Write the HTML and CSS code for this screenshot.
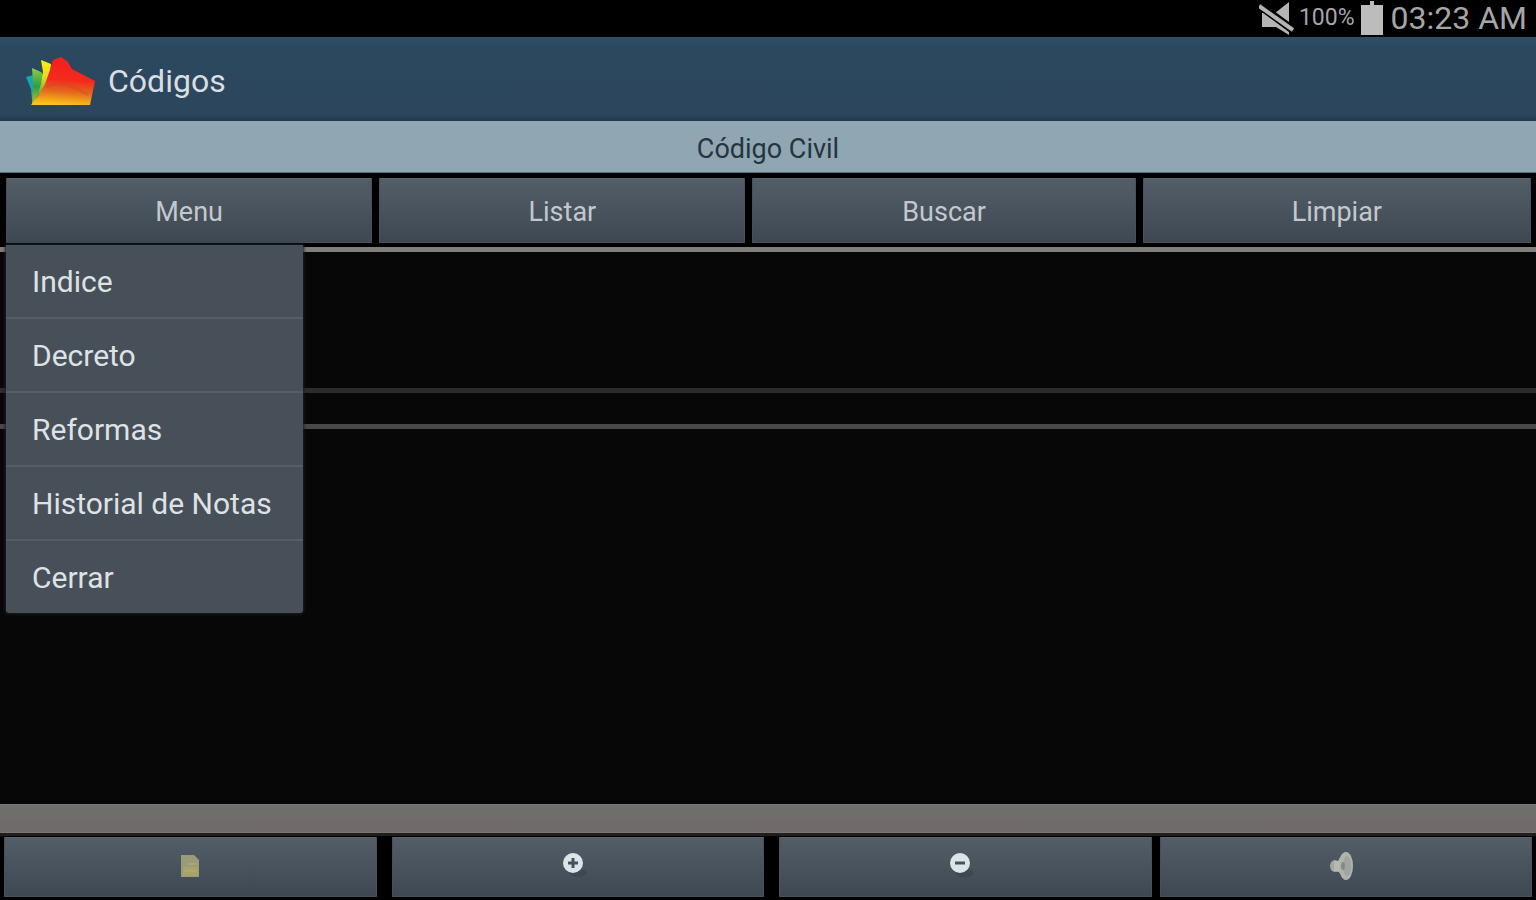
FILE: index.html
```html
<!DOCTYPE html>
<html lang="es">
<head>
<meta charset="utf-8">
<meta name="viewport" content="width=device-width, initial-scale=1">
<title>Códigos</title>
<link rel="stylesheet" href="styles.css">
</head>
<body>
<div class="status">
  <svg class="status-mute" width="36" height="34" viewBox="0 0 36 34" aria-hidden="true">
    <path d="M3 12 H16 L30 1 V34 L17 26 H3 Z" fill="#b4b4b4"/>
    <path d="M0 4 L34 29" stroke="#000" stroke-width="8"/>
    <path d="M0 5 L34 29" stroke="#b4b4b4" stroke-width="4"/>
  </svg>
  <span class="status-level">100%</span>
  <svg class="status-battery" width="22" height="34" viewBox="0 0 22 34" aria-hidden="true">
    <path d="M9 0 H13 V4 H22 V34 H0 V4 H9 Z" fill="#bcbcbc"/>
  </svg>
  <span class="status-time">03:23 AM</span>
</div>
<header class="header">
  <svg class="logo" width="70" height="50" viewBox="0 0 70 50" aria-hidden="true">
    <defs>
      <linearGradient id="folder" x1="0.6" y1="0" x2="0.5" y2="1">
        <stop offset="0" stop-color="#f51d22"/>
        <stop offset="0.48" stop-color="#f42a1c"/>
        <stop offset="0.72" stop-color="#e3681c"/>
        <stop offset="1" stop-color="#fbc619"/>
      </linearGradient>
      <linearGradient id="sheet" x1="0" y1="0" x2="0" y2="1">
        <stop offset="0" stop-color="#8fcf3c"/>
        <stop offset="0.5" stop-color="#2f9c4c"/>
        <stop offset="1" stop-color="#c9c323"/>
      </linearGradient>
      <linearGradient id="page" x1="0" y1="0" x2="0" y2="1">
        <stop offset="0" stop-color="#faf012"/>
        <stop offset="0.45" stop-color="#e3d91c"/>
        <stop offset="1" stop-color="#2c9a48"/>
      </linearGradient>
    </defs>
    <path d="M0 21 L7 19 L11 24 L12 38 L6 44 L5 33 Z" fill="#18a6ac"/>
    <path d="M6 12 L15 16 L20 22 L18 36 L6 49 L7 27 Z" fill="url(#sheet)"/>
    <path d="M15 4 L25 8 L24 18 L18 34 L10 44 L15 28 L17 16 Z" fill="url(#page)"/>
    <path d="M24 14 L27 4 L35 1 L42 6 L46 13 L69 25 L64 49 L5 49 L13 39 L19 28 Z" fill="url(#folder)"/>
    <path d="M20 31 Q38 23 62 39" fill="none" stroke="#c9482a" stroke-width="3" opacity="0.35"/>
  </svg>
  <h1 class="header-title">Códigos</h1>
</header>
<h2 class="subtitle">Código Civil</h2>
<nav class="toolbar">
  <div class="menu-anchor">
    <button class="btn" type="button" aria-expanded="true" aria-controls="menu">Menu</button>
    <div class="menu" id="menu">
      <button class="menu-item" type="button">Indice</button>
      <button class="menu-item" type="button">Decreto</button>
      <button class="menu-item" type="button">Reformas</button>
      <button class="menu-item" type="button">Historial de Notas</button>
      <button class="menu-item" type="button">Cerrar</button>
    </div>
  </div>
  <button class="btn" type="button">Listar</button>
  <button class="btn" type="button">Buscar</button>
  <button class="btn" type="button">Limpiar</button>
</nav>
<main class="content">
  <section class="pane pane-heading"></section>
  <section class="pane pane-note"></section>
  <section class="pane pane-text"></section>
</main>
<div class="strip"></div>
<footer class="actions">
  <button class="btn action action-wide" type="button" aria-label="Nota">
    <svg width="32" height="32" viewBox="0 0 32 32" aria-hidden="true">
      <path d="M7 4 H20 L25 9 V26 H7 Z" fill="#9c9b78"/>
      <path d="M9 16 H24 V25 H9 Z" fill="#aaa367"/>
      <path d="M14 13 H23 M10 20 H22" stroke="#b3ae80" stroke-width="1"/>
    </svg>
  </button>
  <button class="btn action action-wide" type="button" aria-label="Aumentar texto">
    <svg width="32" height="32" viewBox="0 0 32 32" aria-hidden="true">
      <ellipse cx="16" cy="22" rx="9" ry="4" fill="#323b43" opacity="0.4"/>
      <circle cx="11" cy="12" r="10" fill="#dce4e8"/>
      <path d="M11 7 V17 M6 12 H16" stroke="#46525a" stroke-width="3"/>
    </svg>
  </button>
  <button class="btn action" type="button" aria-label="Reducir texto">
    <svg width="32" height="32" viewBox="0 0 32 32" aria-hidden="true">
      <ellipse cx="16" cy="22" rx="9" ry="4" fill="#323b43" opacity="0.4"/>
      <circle cx="11" cy="12" r="10" fill="#dce4e8"/>
      <path d="M6 12 H16" stroke="#46525a" stroke-width="3"/>
    </svg>
  </button>
  <button class="btn action" type="button" aria-label="Sonido">
    <svg width="32" height="32" viewBox="0 0 32 32" aria-hidden="true">
      <ellipse cx="5" cy="15" rx="5" ry="6" fill="#a3a8a5"/>
      <path d="M4 10 L8 10 L12 3 L16 1 V29 L12 26 L9 21 L4 20 Z" fill="#b8bab2"/>
      <ellipse cx="16" cy="15" rx="7" ry="14" fill="#b0b3aa"/>
      <ellipse cx="17" cy="15" rx="4" ry="10" fill="#a1a59f"/>
      <ellipse cx="13" cy="15" rx="2" ry="4" fill="#858a88"/>
    </svg>
  </button>
</footer>
</body>
</html>
```
FILE: styles.css
```css
* {
  box-sizing: border-box;
}

body {
  margin: 0;
  min-height: 100vh;
  display: flex;
  flex-direction: column;
  background: #000;
  color: #dfe2e5;
  font-family: Roboto, "Liberation Sans", sans-serif;
}

h1,
h2 {
  margin: 0;
  font-weight: 400;
}

.status {
  display: flex;
  align-items: center;
  justify-content: flex-end;
  height: 37px;
  padding: 0 9px 2px 0;
  color: #a6a6a6;
}

.status-level {
  margin: 0 6px 0 4px;
  font-size: 23px;
}

.status-time {
  margin-left: 8px;
  font-size: 32px;
}

.header {
  display: flex;
  align-items: center;
  gap: 12px;
  height: 84px;
  padding: 4px 26px 0;
  background: linear-gradient(#30506a, #2c485f 12%, #2b465d 92%, #203a50);
}

.header-title {
  font-size: 32px;
  color: #d9dee2;
}

.subtitle {
  height: 52px;
  padding-top: 3px;
  background: #90a7b3;
  border-bottom: 1px solid #60727d;
  color: #24353f;
  font-size: 27px;
  line-height: 50px;
  text-align: center;
}

.toolbar {
  display: grid;
  grid-template-columns: 366fr 366fr 383fr 388fr;
  gap: 7px;
  padding: 5px 5px 4px 6px;
}

.btn {
  width: 100%;
  height: 65px;
  padding: 3px 0 0;
  border: 1px solid #46515a;
  border-top-color: #5b666f;
  border-radius: 1px;
  background: linear-gradient(#535d66, #4a545f 45%, #3e4852);
  color: #c3c8cc;
  font: inherit;
  font-size: 27px;
}

.menu-anchor {
  position: relative;
}

.menu {
  position: absolute;
  z-index: 1;
  top: 100%;
  left: 0;
  display: flex;
  flex-direction: column;
  margin-top: 2px;
  border-radius: 0 0 3px 3px;
  background: #475058;
  box-shadow: 0 0 3px 1px #1c2126;
}

.menu-item {
  height: 74px;
  padding: 0 31px 0 26px;
  border: 0;
  border-bottom: 2px solid #535e67;
  background: none;
  color: #dfe2e5;
  font: inherit;
  font-size: 30px;
  text-align: left;
  white-space: nowrap;
}

.menu-item:last-child {
  height: 72px;
  border-bottom: 0;
}

.content {
  flex: 1;
  display: flex;
  flex-direction: column;
}

.pane {
  background: #070707;
}

.pane-heading {
  height: 141px;
  border-top: 5px solid #7f7f7b;
}

.pane-note {
  height: 36px;
  border-top: 5px solid #2c2c2c;
}

.pane-text {
  flex: 1;
  border-top: 5px solid #484848;
}

.strip {
  height: 29px;
  border-top: 1px solid #7b7977;
  border-bottom: 1px solid #7b7672;
  background: linear-gradient(#70706d, #706b6a 60%);
}

.actions {
  display: flex;
  gap: 8px;
  padding: 1px 4px 3px;
  border-top: 3px solid #201f1f;
}

.action {
  flex: 1;
  display: flex;
  align-items: center;
  justify-content: center;
  height: 60px;
  padding: 0;
}

.action-wide {
  margin-right: 7px;
}
```
